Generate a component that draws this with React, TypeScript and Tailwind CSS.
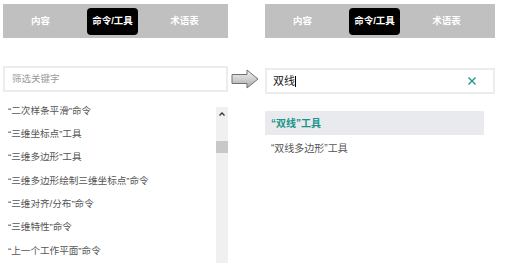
import React from 'react';

const font = { fontFamily: '"Liberation Sans", "Noto Sans CJK SC", sans-serif' };

const tabs = ['内容', '命令/工具', '术语表'];

const leftItems = [
  '“二次样条平滑”命令',
  '“三维坐标点”工具',
  '“三维多边形”工具',
  '“三维多边形绘制三维坐标点”命令',
  '“三维对齐/分布”命令',
  '“三维特性”命令',
  '“上一个工作平面”命令',
];

const TabBar: React.FC = () => (
  <div className="flex items-center h-[34px] bg-[#c0c0c0] pl-[12px] gap-[21px]">
    {tabs.map((t) => (
      <div
        key={t}
        className={`w-[51px] h-[27px] flex items-center justify-center rounded-[4px] text-[9.5px] font-bold text-white ${
          t === '命令/工具' ? 'bg-black' : ''
        }`}
      >
        {t}
      </div>
    ))}
  </div>
);

const Arrow: React.FC = () => (
  <svg width="28" height="20" viewBox="0 0 28 20">
    <defs>
      <linearGradient id="ag" x1="0" y1="0" x2="0" y2="1">
        <stop offset="0" stopColor="#f2f2f2" />
        <stop offset="0.5" stopColor="#d0d0d0" />
        <stop offset="1" stopColor="#a8a8a8" />
      </linearGradient>
    </defs>
    <path
      d="M1 5.5 H16 V1 L27 10 L16 19 V14.5 H1 Z"
      fill="url(#ag)"
      stroke="#707070"
      strokeWidth="1"
      strokeLinejoin="round"
    />
  </svg>
);

export default function App() {
  return (
    <div className="w-[505px] h-[276px] bg-white overflow-hidden flex pt-[4px] pl-[3px]" style={font}>
      {/* left panel */}
      <div className="w-[225px] flex flex-col">
        <TabBar />
        <div className="mt-[28px] h-[26px] border-2 border-[#ececec] flex items-center px-[7px] text-[9.5px] text-[#9a9a9a]">
          筛选关键字
        </div>
        <div className="flex mt-[7px]">
          <div className="flex-1 flex flex-col pl-[5px]">
            {leftItems.map((it) => (
              <div key={it} className="h-[23.4px] flex items-center text-[9.6px] text-[#555]">
                {it}
              </div>
            ))}
          </div>
          <div className="w-[12px] h-[156px] mt-[8px] bg-[#f0f0f0] flex flex-col items-center">
            <svg width="8" height="6" viewBox="0 0 8 6" className="mt-[4px]">
              <path d="M1.5 4.5 L4 2 L6.5 4.5" fill="none" stroke="#333" strokeWidth="1.3" />
            </svg>
            <div className="w-[12px] h-[12px] bg-[#c8c8c8] mt-[24px]" />
          </div>
        </div>
      </div>

      {/* arrow */}
      <div className="w-[37px] pl-[3px] pt-[65px]">
        <Arrow />
      </div>

      {/* right panel */}
      <div className="w-[230px] flex flex-col">
        <div className="h-[35px]">
          <TabBar />
        </div>
        <div className="mt-[29px] h-[26px] border-2 border-[#ececec] flex items-center justify-between px-[6px] text-[11px] text-[#222]">
          <span>
            双线<span className="inline-block w-px h-[11px] bg-black align-middle" />
          </span>
          <svg width="10" height="10" viewBox="0 0 10 10" className="mr-[10px]">
            <path d="M1.5 1.5 L8.5 8.5 M8.5 1.5 L1.5 8.5" stroke="#1b9a8c" strokeWidth="1.4" />
          </svg>
        </div>
        <div className="mt-[17px] w-[219px] h-[24px] bg-[#e9eaed] flex items-center px-[6px] text-[10px] font-bold text-[#17958a]">
          “双线”工具
        </div>
        <div className="h-[26px] flex items-center px-[6px] text-[10px] text-[#555]">
          “双线多边形”工具
        </div>
      </div>
    </div>
  );
}
